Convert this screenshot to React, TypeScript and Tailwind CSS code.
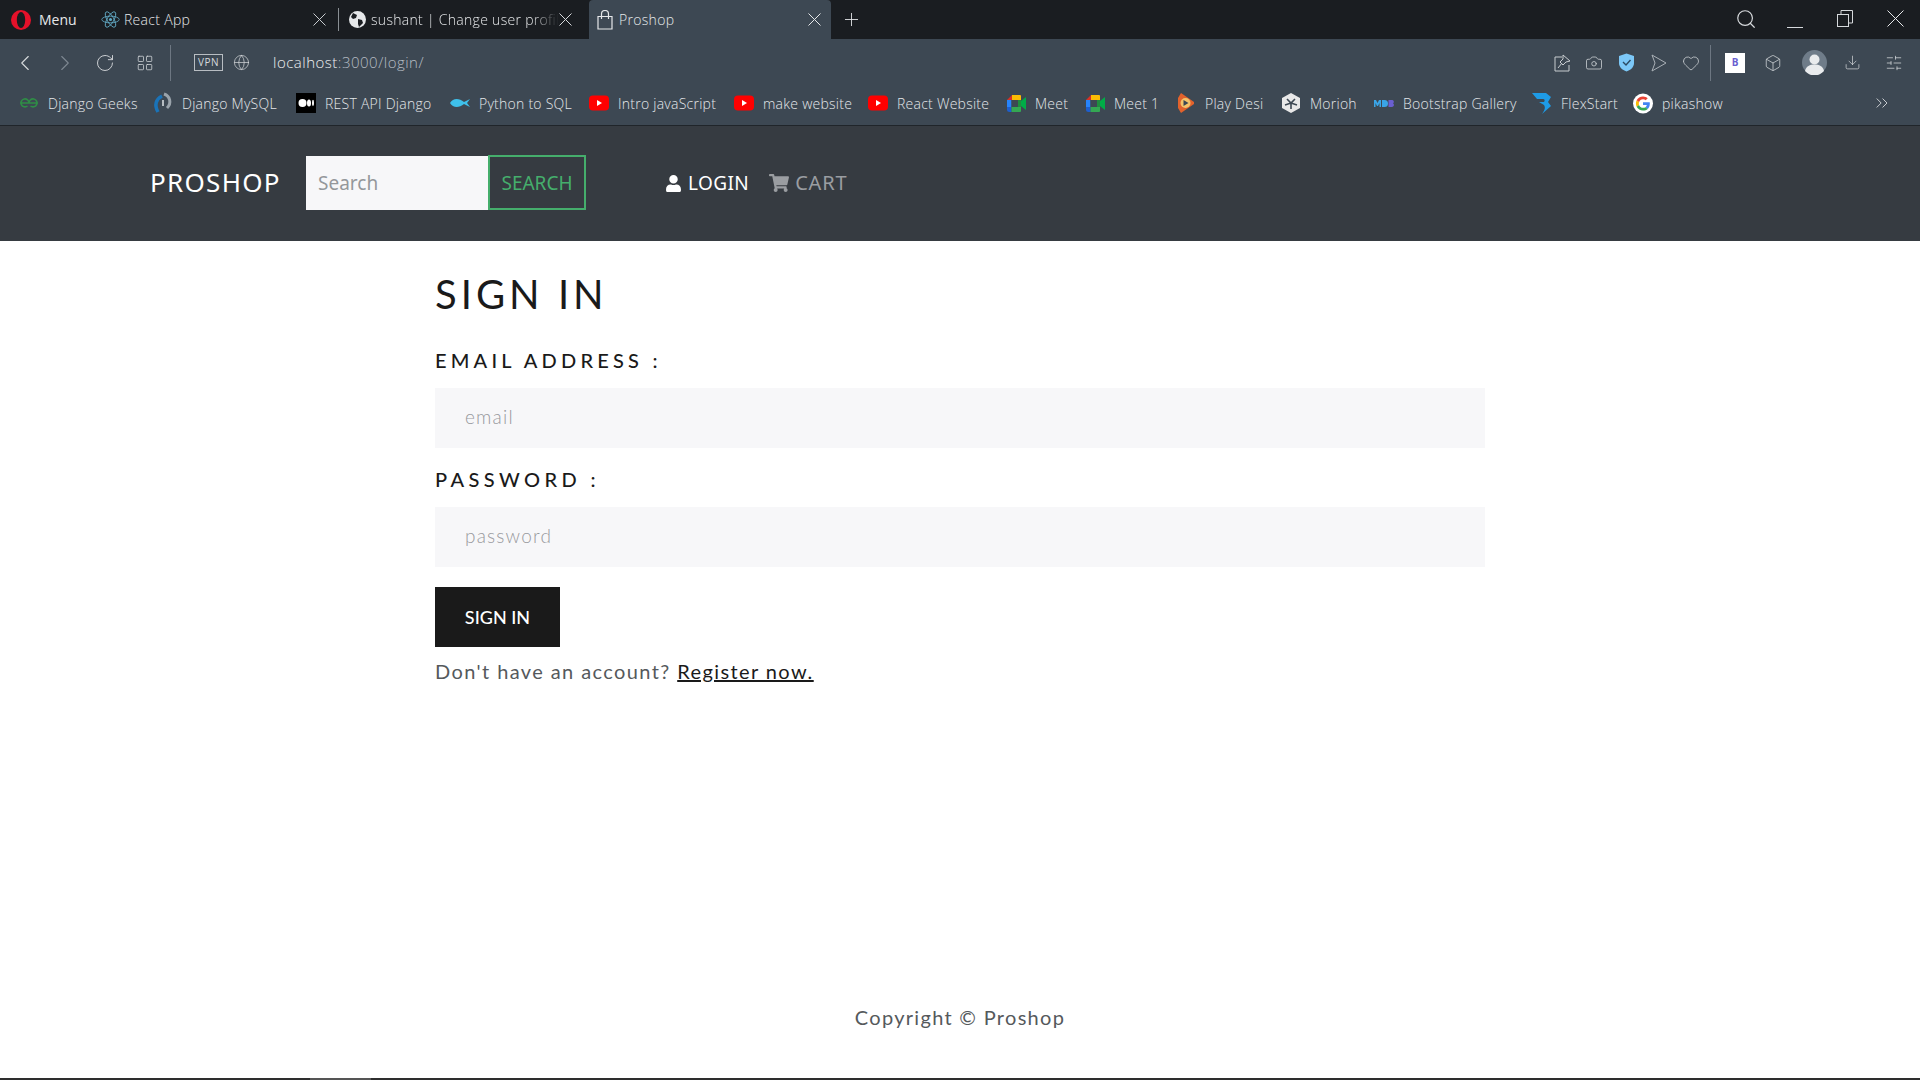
import React from "react";
import { ChevronLeft, ChevronRight, RotateCw, LayoutGrid, Globe, Plus, Search, Heart, Camera, Box, Download, SlidersHorizontal, ChevronsRight } from "lucide-react";
import { FaUser, FaShoppingCart } from "react-icons/fa";

const ui = "font-['Open_Sans','Noto_Sans',sans-serif] font-light";
const page = "font-['Lato','Open_Sans',sans-serif]";

const XIcon = ({ s = 13, c = "#c8ccd0" }: { s?: number; c?: string }) => (
  <svg width={s} height={s} viewBox={`0 0 ${s} ${s}`} stroke={c} strokeWidth="1" className="shrink-0">
    <path d={`M0.500 0.500L${s - 0.5} ${s - 0.5}M${s - 0.5} 0.500L0.500 ${s - 0.5}`} />
  </svg>
);

const ReactIcon = () => (
  <svg width="19" height="19" viewBox="-12 -12 24 24" fill="none" stroke="#61a9c4" strokeWidth="1.1">
    <circle r="2" fill="#61a9c4" stroke="none" />
    <ellipse rx="11" ry="4.2" />
    <ellipse rx="11" ry="4.2" transform="rotate(60)" />
    <ellipse rx="11" ry="4.2" transform="rotate(120)" />
  </svg>
);

const Opera = () => (
  <svg width="20" height="20" viewBox="0 0 20 20">
    <circle cx="10" cy="10" r="10" fill="#e5112a" />
    <ellipse cx="10" cy="10" rx="4.2" ry="8" fill="#191c20" />
  </svg>
);

const Yt = () => (
  <svg width="20" height="16" viewBox="0 0 20 16">
    <rect width="20" height="15" y="0.5" rx="4" fill="#f00" />
    <path d="M8 5l5 3-5 3z" fill="#fff" />
  </svg>
);

const MeetIcon = () => (
  <svg width="19" height="19" viewBox="0 0 19 19">
    <path d="M0 6L5 1v5z" fill="#d93025" />
    <rect x="0" y="6" width="4.500" height="7" fill="#2684fc" />
    <path d="M0 13h4.500v5H2.500A2.500 2.500 0 0 1 0 15.500z" fill="#1d5fcf" />
    <path d="M5 1h8a1 1 0 0 1 1 1v4H5z" fill="#fbbc04" />
    <path d="M4.500 13H14v4a1 1 0 0 1-1 1H4.500z" fill="#34a853" />
    <rect x="4.500" y="6" width="6.500" height="7" fill="#3d4853" />
    <path d="M11 6h3v7h-3z" fill="#1e8e3e" />
    <path d="M14 7l5-4v13l-5-4z" fill="#00ac47" />
  </svg>
);

const G = () => (
  <svg width="21" height="21" viewBox="0 0 48 48">
    <circle cx="24" cy="24" r="24" fill="#fff" />
    <g transform="translate(7 7) scale(.71)">
      <path fill="#EA4335" d="M24 9.5c3.5 0 6.6 1.2 9.1 3.6l6.8-6.8C35.8 2.4 30.3 0 24 0 14.6 0 6.5 5.4 2.6 13.2l7.9 6.2C12.4 13.7 17.7 9.5 24 9.5z" />
      <path fill="#4285F4" d="M47 24.5c0-1.6-.1-3.1-.4-4.5H24v9h12.9c-.6 3-2.2 5.5-4.7 7.2l7.7 6C44.4 37.9 47 31.800 47 24.500z" />
      <path fill="#FBBC05" d="M10.500 28.600c-.5-1.500-.8-3-.8-4.600s.3-3.100.8-4.600l-7.900-6.200C.9 16.500 0 20.100 0 24s.9 7.500 2.600 10.800z" />
      <path fill="#34A853" d="M24 48c6.500 0 11.900-2.100 15.900-5.800l-7.700-6c-2.200 1.500-4.900 2.300-8.200 2.300-6.300 0-11.600-4.200-13.500-9.900l-7.900 6.200C6.500 42.600 14.600 48 24 48z" />
    </g>
  </svg>
);

const bookmarks: { label: string; w: number; icon: React.ReactNode }[] = [
  { label: "Django Geeks", w: 89, icon: (
    <svg width="20" height="10" viewBox="0 0 20 10" fill="none" stroke="#2f8d46" strokeWidth="1.6"><path d="M1 5h18M10 5a4 4 0 1 0-1.500 3M10 5a4 4 0 1 1 1.500 3" /></svg>
  ) },
  { label: "Django MySQL", w: 98, icon: (
    <svg width="20" height="24" viewBox="0 0 20 24" fill="none"><path d="M9 5C3 8 1 14 5 21" stroke="#1a73b8" strokeWidth="3.500" /><path d="M11 3c6 2 8 9 3 14" stroke="#9aa3ab" strokeWidth="3" /><path d="M10 9v6" stroke="#dfe3e6" strokeWidth="1.500" /></svg>
  ) },
  { label: "REST API Django", w: 109, icon: (
    <svg width="20" height="20" viewBox="0 0 20 20"><rect width="20" height="20" fill="#000" /><circle cx="6.500" cy="10" r="4" fill="#fff" /><ellipse cx="13" cy="10" rx="2" ry="3.600" fill="#fff" /><ellipse cx="17" cy="10" rx="1" ry="3.200" fill="#fff" /></svg>
  ) },
  { label: "Python to SQL", w: 94, icon: (
    <svg width="20" height="10" viewBox="0 0 20 10"><path d="M0 5c3-5 9-5 14-1l6-3-3 4 3 4-6-3c-5 4-11 4-14-1z" fill="#3ec0ea" /></svg>
  ) },
  { label: "Intro javaScript", w: 100, icon: <Yt /> },
  { label: "make website", w: 89, icon: <Yt /> },
  { label: "React Website", w: 93, icon: <Yt /> },
  { label: "Meet", w: 34, icon: <MeetIcon /> },
  { label: "Meet 1", w: 46, icon: <MeetIcon /> },
  { label: "Play Desi", w: 60, icon: (
    <svg width="18" height="20" viewBox="0 0 18 20"><path d="M4 0l13 9v2L4 20 1 15V5z" fill="#e2622c" /><circle cx="8.500" cy="10" r="5" fill="#f5c36a" /><path d="M6.500 7l5 3-5 3z" fill="#3d4853" /></svg>
  ) },
  { label: "Morioh", w: 48, icon: (
    <svg width="20" height="20" viewBox="0 0 20 20"><path d="M10 0l9 5v10l-9 5-9-5V5z" fill="#e8e8e8" /><path d="M6 6l4 4 4-4M10 10v6M4 12l6-2 6 2" stroke="#3d4853" strokeWidth="1.600" fill="none" /></svg>
  ) },
  { label: "Bootstrap Gallery", w: 113, icon: (
    <svg width="20" height="9" viewBox="0 0 20 9"><path d="M0 8V1h2l1.500 3L5 1h2v7H5.500V4L4 7H3L1.500 4v4zM8 1h2.500a3.500 3.500 0 0 1 0 7H8z" fill="#3aa5e8" /><path d="M14.500 1h3.500a1.800 1.800 0 0 1 1 3.300A2 2 0 0 1 18 8h-3.500z" fill="#6a5fd0" /></svg>
  ) },
  { label: "FlexStart", w: 56, icon: (
    <svg width="20" height="22" viewBox="0 0 20 22"><path d="M0 1h14l5 4-3 5 3 4-9 8c2-3 4-6 2-9L7 10h5c1-1 1-3-1-3H5z" fill="#1e9be6" /></svg>
  ) },
  { label: "pikashow", w: 64, icon: <G /> },
];

const Bookmark = ({ label, w, icon }: { label: string; w: number; icon: React.ReactNode }) => (
  <div className="flex items-center gap-[9px] shrink-0">
    <span className="w-5 h-5 flex items-center justify-center">{icon}</span>
    <span className="text-[14px] tracking-[.25px] text-[#e4e7ea] whitespace-nowrap" style={{ width: w }}>{label}</span>
  </div>
);

function TabBar() {
  return (
    <div className={`h-[39px] bg-[#1a1d21] flex items-center text-[#e6e8ea] text-[14px] tracking-[.3px] ${ui}`}>
      <div className="w-[89px] pl-[11px] flex items-center gap-2 shrink-0">
        <Opera />
        <span className="font-normal tracking-normal">Menu</span>
      </div>
      <div className="w-[250px] pl-3 pr-[12px] flex items-center border-r border-[#8a8f94] h-[23px] shrink-0">
        <ReactIcon />
        <span className="flex-1 ml-[4px]">React App</span>
        <XIcon s={13} />
      </div>
      <div className="w-[250px] pl-[10px] pr-[17px] flex items-center shrink-0">
        <svg width="17" height="17" viewBox="0 0 17 17" className="shrink-0"><circle cx="8.500" cy="8.500" r="8.500" fill="#e6e8ea" /><path d="M4 2l4 2-1 3-3 1-2-2zM9 8l4 1 1 3-4 4-1-3z" fill="#1a1d21" /></svg>
        <span className="flex-1 ml-[5px] overflow-hidden whitespace-nowrap [mask-image:linear-gradient(to_right,#000_85%,transparent)]">sushant | Change user profile</span>
        <XIcon s={13} c="#d6d9dc" />
      </div>
      <div className="w-[242px] h-full bg-[#3d4853] rounded-t-[4px] pl-2 pr-[10px] flex items-center shrink-0">
        <svg width="16" height="20" viewBox="0 0 16 20" fill="none" stroke="#e6e8ea" strokeWidth="1.200" className="shrink-0"><path d="M1 6.500h14V19H1z" /><path d="M4.500 9V4a3.500 3.500 0 0 1 7 0v5" /></svg>
        <span className="flex-1 ml-[6px]">Proshop</span>
        <XIcon s={13} c="#e6e8ea" />
      </div>
      <Plus size={21} strokeWidth={1} className="ml-[10px]" />
      <div className="flex-1" />
      <Search size={22} strokeWidth={1.300} className="text-[#d6d9dc] mb-[2px]" />
      <div className="w-4 h-px bg-[#d6d9dc] ml-[30px] mt-[15px]" />
      <svg width="16" height="17" viewBox="0 0 16 17" fill="none" stroke="#d6d9dc" className="ml-[34px] mb-[2px]"><rect x="0.500" y="4.500" width="11" height="12" /><path d="M4 4V0.500h11.500V13H12" /></svg>
      <div className="ml-[34px] mr-[16px] mb-[2px]"><XIcon s={17} c="#e6e8ea" /></div>
    </div>
  );
}

function ToolBar() {
  return (
    <div className={`h-[47px] bg-[#3d4853] flex items-center text-[#d6d9dc] ${ui}`}>
      <div className="flex items-center pl-[12px] shrink-0">
        <ChevronLeft size={26} strokeWidth={1} />
        <ChevronRight size={26} strokeWidth={1} className="ml-[14px] text-[#7d8791]" />
        <RotateCw size={20} strokeWidth={1.100} className="ml-[17px]" />
        <LayoutGrid size={18} strokeWidth={1} className="ml-[21px]" />
        <div className="w-px h-9 bg-[#6d7782] ml-[16px]" />
        <div className="ml-[23px] w-[29px] h-[17px] border border-[#b8bdc2] flex items-center justify-center text-[10px] font-normal tracking-[.5px]">VPN</div>
        <Globe size={17} strokeWidth={1} className="ml-[10px]" />
        <span className="ml-[23px] text-[15px] tracking-[.5px] text-[#b5bcc3]"><span className="text-[#eef0f2]">localhost</span>:3000/login/</span>
      </div>
      <div className="flex-1" />
      <div className="flex items-center pr-[17px] shrink-0">
        <svg width="17" height="18" viewBox="0 0 17 18" fill="none" stroke="#c8ccd0" strokeWidth="1"><path d="M8 3H1v14h14v-6" /><path d="M4 14l4-5M9 1l7 6-4 1-3 3-3-3 3-3z" /></svg>
        <Camera size={18} strokeWidth={1} className="ml-[14px]" />
        <svg width="15" height="19" viewBox="0 0 15 19" className="ml-[16px]"><path d="M7.500 0.500L15 3v7c0 4-3 7-7.500 8.500C3 17 0 14 0 10V3z" fill="#7cc8f8" /><path d="M4 9l3 3 4.500-5" stroke="#2b4a63" strokeWidth="1.400" fill="none" /></svg>
        <svg width="16" height="18" viewBox="0 0 16 18" fill="none" stroke="#aab0b6" className="ml-[17px]"><path d="M1 1l14 8-14 8 3-8z" /></svg>
        <Heart size={18} strokeWidth={1} className="ml-[15px]" />
        <div className="w-px h-9 bg-[#6d7782] ml-[10px]" />
        <div className="ml-[14px] w-5 h-5 bg-white flex items-center justify-center text-[10px] font-bold text-[#6a5fd0]">B</div>
        <Box size={18} strokeWidth={1} className="ml-[19px]" />
        <svg width="25" height="25" viewBox="0 0 25 25" className="ml-[20px]"><circle cx="12.500" cy="12.500" r="12.500" fill="#6f7c89" /><circle cx="12.500" cy="9.500" r="5" fill="#e9ebed" /><path d="M3 21c1-5 5-6.500 9.500-6.500S21 16 22 21a12.500 12.500 0 0 1-19 0z" fill="#e9ebed" /></svg>
        <Download size={17} strokeWidth={1} className="ml-[17px]" />
        <SlidersHorizontal size={18} strokeWidth={1} className="ml-[24px]" />
      </div>
    </div>
  );
}

function BookmarkBar() {
  return (
    <div className={`h-[39px] bg-[#3d4853] flex items-center pl-[19px] pb-[5px] ${ui}`}>
      <div className="flex items-center gap-[16px]">
        {bookmarks.map((b) => <Bookmark key={b.label} {...b} />)}
      </div>
      <div className="flex-1" />
      <ChevronsRight size={20} strokeWidth={1.100} className="text-[#d6d9dc] mr-[28px]" />
    </div>
  );
}

function Nav() {
  return (
    <nav className="h-[116px] bg-[#363b41] border-t border-[#20252a] flex items-center pl-[150px] pb-[2px] font-['Noto_Sans',sans-serif]">
      <span className="text-[26px] text-white tracking-[1.300px] w-[156px]">PROSHOP</span>
      <form className="flex items-center">
        <input placeholder="Search" className="w-[182px] h-[54px] bg-[#f7f7f9] px-3 text-[19px] placeholder:text-[#94979b] outline-none" />
        <button type="button" className="w-[98px] h-[55px] border-2 border-[#45ae6c] pt-[2px] text-[#45ae6c] text-[19px] flex items-center justify-center">SEARCH</button>
      </form>
      <div className="flex items-center ml-[79px] mt-[1px] text-white text-[19px] tracking-[.4px]">
        <FaUser size={17} />
        <span className="ml-[6px]">LOGIN</span>
      </div>
      <div className="flex items-center ml-[20px] text-[#9a9da1] text-[20px] tracking-[.8px]">
        <FaShoppingCart size={20} />
        <span className="ml-[6px]">CART</span>
      </div>
    </nav>
  );
}

function Main() {
  return (
    <main className={`flex-1 w-[1050px] mx-auto text-[#1a1a1a] ${page}`}>
      <h1 className="text-[40px] leading-[48px] mt-[29px] tracking-[4px] font-normal">SIGN IN</h1>
      <form className="flex flex-col">
        <label className="text-[20px] leading-[24px] mt-[30px] tracking-[4.200px] font-medium">EMAIL ADDRESS :</label>
        <input placeholder="email" className="mt-[16px] h-[60px] bg-[#f7f7f9] px-[30px] pb-[3px] text-[19px] font-light tracking-[1.200px] placeholder:text-[#98999d] outline-none" />
        <label className="text-[20px] leading-[24px] mt-[19px] tracking-[4.400px] font-medium">PASSWORD :</label>
        <input placeholder="password" className="mt-[16px] h-[60px] bg-[#f7f7f9] px-[30px] pb-[3px] text-[19px] font-light tracking-[1.200px] placeholder:text-[#98999d] outline-none" />
        <button type="button" className="mt-[20px] w-[125px] h-[60px] bg-[#1a1a1a] text-white text-[18px] font-medium">SIGN IN</button>
      </form>
      <p className="mt-[12px] text-[20px] leading-[24px] tracking-[1.400px] text-[#55595c]">
        Don't have an account? <a className="underline text-[#1a1a1a]">Register now.</a>
      </p>
    </main>
  );
}

export default function App() {
  return (
    <div className="w-[1920px] h-[1080px] overflow-hidden flex flex-col bg-white">
      <TabBar />
      <ToolBar />
      <BookmarkBar />
      <Nav />
      <Main />
      <footer className={`h-[90px] pb-[49px] flex items-end justify-center text-[20px] leading-[24px] tracking-[1.300px] text-[#55595c] ${page}`}>
        Copyright © Proshop
      </footer>
      <div className="h-[2px] bg-[#2e2e2e] pl-[310px]"><div className="w-[61px] h-full bg-[#555]" /></div>
    </div>
  );
}
